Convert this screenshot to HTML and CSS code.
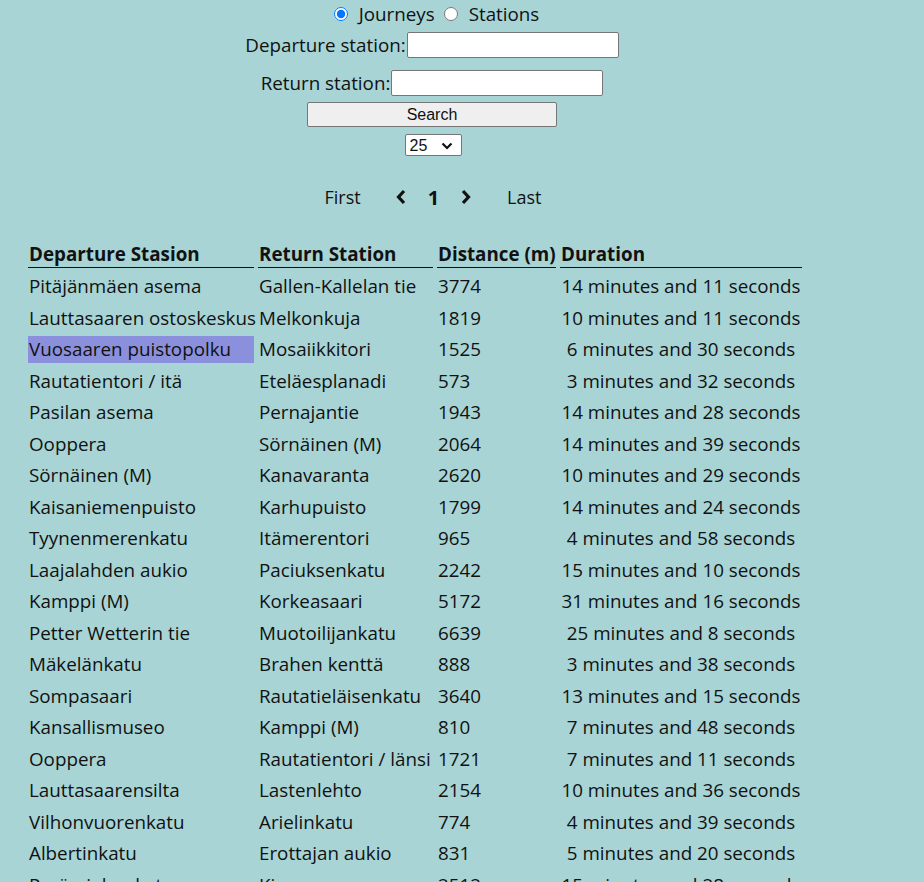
FILE: index.html
```html
<!DOCTYPE html>
<html lang="fi">
<head>
<meta charset="utf-8">
<title>Journeys</title>
<link rel="stylesheet" href="styles.css">
</head>
<body>
<div class="page">
  <div class="controls">
    <div class="mode">
      <label class="opt"><input type="radio" name="mode" checked> Journeys</label>
      <label class="opt"><input type="radio" name="mode"> Stations</label>
    </div>
    <div class="field field-dep"><label>Departure station:</label><input class="text" type="text"></div>
    <div class="field field-ret"><label>Return station:</label><input class="text" type="text"></div>
    <button class="search" type="button">Search</button>
    <div class="select-wrap">
      <select class="per-page"><option>25</option><option>50</option><option>100</option></select>
      <svg class="select-arrow" width="12" height="8" viewBox="0 0 12 8"><polyline points="1.5,1.5 6,6 10.5,1.5" fill="none" stroke="#111" stroke-width="2.2"/></svg>
    </div>
  </div>
  <nav class="pager">
    <span class="pg-text pg-first">First</span>
    <svg class="chev" width="10" height="16" viewBox="0 0 10 16"><polyline points="8,2 2.5,8 8,14" fill="none" stroke="#111" stroke-width="3.2"/></svg>
    <span class="pg-num">1</span>
    <svg class="chev" width="10" height="16" viewBox="0 0 10 16"><polyline points="2,2 7.5,8 2,14" fill="none" stroke="#111" stroke-width="3.2"/></svg>
    <span class="pg-text pg-last">Last</span>
  </nav>
</div>
<table class="journeys">
  <thead>
    <tr><th class="c1">Departure Stasion</th><th class="c2">Return Station</th><th class="c3">Distance (m)</th><th class="c4">Duration</th></tr>
  </thead>
  <tbody>
    <tr><td>Pitäjänmäen asema</td><td>Gallen-Kallelan tie</td><td>3774</td><td class="dur">14 minutes and 11 seconds</td></tr>
    <tr><td>Lauttasaaren ostoskeskus</td><td>Melkonkuja</td><td>1819</td><td class="dur">10 minutes and 11 seconds</td></tr>
    <tr><td class="hl">Vuosaaren puistopolku</td><td>Mosaiikkitori</td><td>1525</td><td class="dur">6 minutes and 30 seconds</td></tr>
    <tr><td>Rautatientori / itä</td><td>Eteläesplanadi</td><td>573</td><td class="dur">3 minutes and 32 seconds</td></tr>
    <tr><td>Pasilan asema</td><td>Pernajantie</td><td>1943</td><td class="dur">14 minutes and 28 seconds</td></tr>
    <tr><td>Ooppera</td><td>Sörnäinen (M)</td><td>2064</td><td class="dur">14 minutes and 39 seconds</td></tr>
    <tr><td>Sörnäinen (M)</td><td>Kanavaranta</td><td>2620</td><td class="dur">10 minutes and 29 seconds</td></tr>
    <tr><td>Kaisaniemenpuisto</td><td>Karhupuisto</td><td>1799</td><td class="dur">14 minutes and 24 seconds</td></tr>
    <tr><td>Tyynenmerenkatu</td><td>Itämerentori</td><td>965</td><td class="dur">4 minutes and 58 seconds</td></tr>
    <tr><td>Laajalahden aukio</td><td>Paciuksenkatu</td><td>2242</td><td class="dur">15 minutes and 10 seconds</td></tr>
    <tr><td>Kamppi (M)</td><td>Korkeasaari</td><td>5172</td><td class="dur">31 minutes and 16 seconds</td></tr>
    <tr><td>Petter Wetterin tie</td><td>Muotoilijankatu</td><td>6639</td><td class="dur">25 minutes and 8 seconds</td></tr>
    <tr><td>Mäkelänkatu</td><td>Brahen kenttä</td><td>888</td><td class="dur">3 minutes and 38 seconds</td></tr>
    <tr><td>Sompasaari</td><td>Rautatieläisenkatu</td><td>3640</td><td class="dur">13 minutes and 15 seconds</td></tr>
    <tr><td>Kansallismuseo</td><td>Kamppi (M)</td><td>810</td><td class="dur">7 minutes and 48 seconds</td></tr>
    <tr><td>Ooppera</td><td>Rautatientori / länsi</td><td>1721</td><td class="dur">7 minutes and 11 seconds</td></tr>
    <tr><td>Lauttasaarensilta</td><td>Lastenlehto</td><td>2154</td><td class="dur">10 minutes and 36 seconds</td></tr>
    <tr><td>Vilhonvuorenkatu</td><td>Arielinkatu</td><td>774</td><td class="dur">4 minutes and 39 seconds</td></tr>
    <tr><td>Albertinkatu</td><td>Erottajan aukio</td><td>831</td><td class="dur">5 minutes and 20 seconds</td></tr>
    <tr><td>Perämiehenkatu</td><td>Kiasma</td><td>2512</td><td class="dur">15 minutes and 28 seconds</td></tr>
  </tbody>
</table>
</body>
</html>
```

FILE: styles.css
```css
html, body {
  margin: 0;
  padding: 0;
  background: #a8d4d5;
}
body {
  font-family: "Open Sans", "Noto Sans", sans-serif;
  font-size: 18.8px;
  color: #111;
}
.page {
  width: 864px;
  text-align: center;
}
.controls {
  display: flex;
  flex-direction: column;
  align-items: center;
  padding-top: 1px;
}
.mode {
  display: flex;
  gap: 8px;
  height: 26px;
  align-items: center;
  margin-left: 8px;
}
.opt {
  display: flex;
  align-items: center;
  gap: 4px;
}
.opt input {
  margin: 0 7px 0 1px;
  width: 14px;
  height: 14px;
}
.field {
  display: flex;
  align-items: center;
  height: 26px;
}
.field-dep { margin-top: 5px; }
.field-ret { margin-top: 12px; }
.field label { margin-right: 1px; }
.text {
  width: 212px;
  height: 26px;
  box-sizing: border-box;
  border: 1px solid #767676;
  border-radius: 2px;
  background: #fff;
  padding: 1px 2px;
  margin: 0;
}
.search {
  margin-top: 6px;
  width: 250px;
  height: 25px;
  box-sizing: border-box;
  border: 1px solid #767676;
  border-radius: 2px;
  background: #efefef;
  font-family: "Liberation Sans", Arial, sans-serif;
  font-size: 16px;
  color: #111;
  padding: 0;
}
.select-wrap {
  position: relative;
  margin-top: 7px;
  width: 57px;
  height: 22px;
  margin-left: 2px;
}
.per-page {
  appearance: none;
  -webkit-appearance: none;
  display: block;
  width: 57px;
  height: 22px;
  box-sizing: border-box;
  border: 1px solid #767676;
  border-radius: 2px;
  background: #fff;
  font-family: "Liberation Sans", Arial, sans-serif;
  font-size: 16px;
  color: #111;
  padding: 0 0 0 4px;
  margin: 0;
}
.select-arrow {
  position: absolute;
  right: 9px;
  top: 8px;
  pointer-events: none;
}
.pager {
  display: flex;
  justify-content: center;
  align-items: center;
  margin-top: 28px;
  height: 26px;
  margin-left: 2px;
  font-size: 18px;
}
.pg-first { margin-right: 35px; }
.pg-last { margin-left: 36px; }
.pg-num {
  font-weight: bold;
  font-size: 20px;
  margin: 0 22px;
}
.journeys {
  margin-left: 24px;
  margin-top: 26px;
  border-collapse: separate;
  border-spacing: 4px 5px;
  font-size: 18.8px;
  table-layout: fixed;
  width: 782px;
}
.journeys th, .journeys td {
  height: 26.5px;
  padding: 0 1px;
  white-space: nowrap;
  overflow: visible;
  text-align: left;
  vertical-align: middle;
  box-sizing: border-box;
}
.journeys th {
  font-weight: bold;
  border-bottom: 1px solid #111;
  height: 27px;
}
.c1 { width: 226px; }
.c2 { width: 175px; }
.c3 { width: 119px; }
.c4 { width: 242px; }
.journeys td.dur { text-align: center; }
.journeys td.hl { background: #8b90dd; }
```
